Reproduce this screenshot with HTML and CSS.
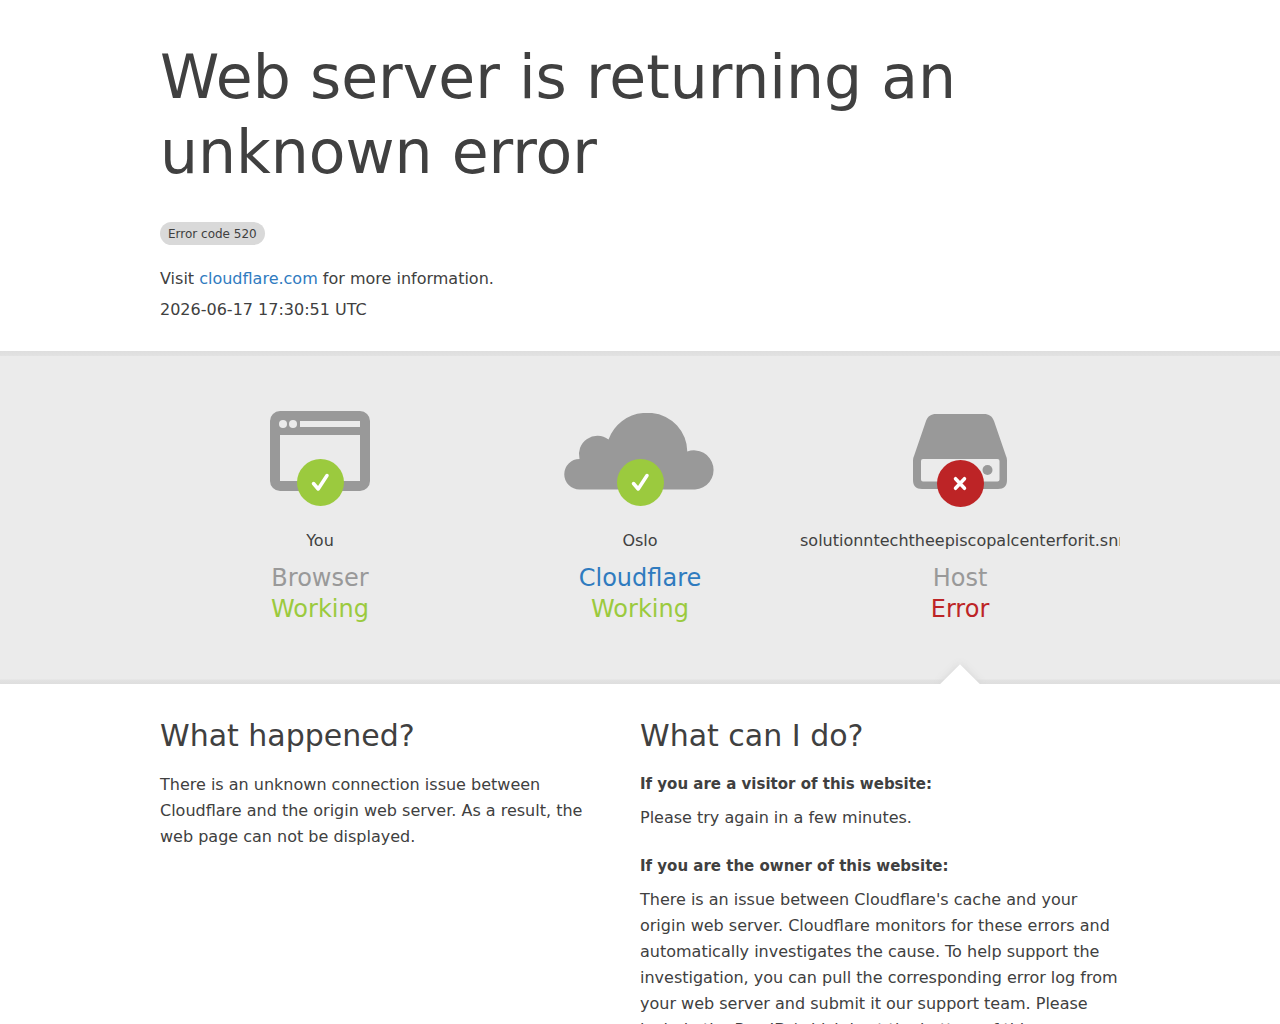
FILE: index.html
```html
<!DOCTYPE html>
<html lang="en">
<head>
<meta charset="utf-8">
<meta name="viewport" content="width=device-width, initial-scale=1">
<title>520: Web server is returning an unknown error</title>
<link rel="stylesheet" href="styles.css">
</head>
<body>
<header class="container intro">
  <h1 class="title">Web server is returning an unknown error</h1>
  <span class="code">Error code 520</span>
  <p class="info">Visit <a class="link" href="https://www.cloudflare.com/">cloudflare.com</a> for more information.</p>
  <p class="time">2026-06-17 17:30:51 UTC</p>
</header>
<main>
  <section class="band">
    <div class="container statuses">
      <div class="status">
        <svg class="icon" viewBox="0 0 160 98" aria-hidden="true">
          <path class="shape" fill-rule="evenodd" d="M40 0h80a10 10 0 0 1 10 10v60a10 10 0 0 1-10 10H40a10 10 0 0 1-10-10V10A10 10 0 0 1 40 0zM40 24v46h80V24zM60 10v6h60v-6z"/>
          <circle class="hole" cx="43" cy="13" r="4"/>
          <circle class="hole" cx="53" cy="13" r="4"/>
          <circle class="ok" cx="80.5" cy="71.5" r="23.5"/>
          <path class="mark" d="M73.5 72.5l4.700 5.500L87 64.500"/>
        </svg>
        <span class="place">You</span>
        <h2 class="name">Browser</h2>
        <span class="state state-ok">Working</span>
      </div>
      <div class="status">
        <svg class="icon" viewBox="0 0 160 98" aria-hidden="true">
          <path class="shape" d="M19.500 78.500a15.250 15.250 0 0 1 0-30.500A18.500 18.500 0 0 1 48.500 28.500A40 40 0 0 1 83 2h9A39 39 0 0 1 127.300 40.500A19.600 19.600 0 1 1 135 78.500z"/>
          <circle class="ok" cx="80.5" cy="71.5" r="23.5"/>
          <path class="mark" d="M73.5 72.5l4.700 5.500L87 64.500"/>
        </svg>
        <span class="place">Oslo</span>
        <h2 class="name"><a class="link" href="https://www.cloudflare.com/">Cloudflare</a></h2>
        <span class="state state-ok">Working</span>
      </div>
      <div class="status status-active">
        <svg class="icon" viewBox="0 0 160 98" aria-hidden="true">
          <path class="shape" fill-rule="evenodd" d="M56 3h48c5 0 8 2 10 7l12 35c1 2 1 4 1 6v18c0 6-3 9-9 9H42c-6 0-9-3-9-9V51c0-2 0-4 1-6l12-35c2-5 5-7 10-7zM43 48q-2 0-2 2v18.500q0 2 2 2h74.500q2 0 2-2V50q0-2-2-2z"/>
          <circle class="shape" cx="107.5" cy="59" r="5"/>
          <circle class="bad" cx="80.5" cy="72.5" r="23.5"/>
          <path class="mark" d="M75.500 67.700l9 9.600M84.500 67.700l-9 9.600"/>
        </svg>
        <span class="place">solutionntechtheepiscopalcenterforit.snm</span>
        <h2 class="name">Host</h2>
        <span class="state state-bad">Error</span>
      </div>
    </div>
  </section>
  <div class="container details">
    <section class="detail">
      <h2 class="heading">What happened?</h2>
      <p class="text">There is an unknown connection issue between Cloudflare and the origin web server. As a result, the web page can not be displayed.</p>
    </section>
    <section>
      <h2 class="heading">What can I do?</h2>
      <h3 class="subheading">If you are a visitor of this website:</h3>
      <p class="text advice">Please try again in a few minutes.</p>
      <h3 class="subheading">If you are the owner of this website:</h3>
      <p class="text">There is an issue between Cloudflare's cache and your origin web server. Cloudflare monitors for these errors and automatically investigates the cause. To help support the investigation, you can pull the corresponding error log from your web server and submit it our support team. Please include the Ray ID (which is at the bottom of this error page).</p>
    </section>
  </div>
</main>
</body>
</html>
```
FILE: styles.css
```css
* {
  box-sizing: border-box;
}

body,
h1,
h2,
h3,
p {
  margin: 0;
}

body {
  background: #fff;
  color: #404040;
  font: 16px/24px "DejaVu Sans", sans-serif;
}

.container {
  width: 75%;
  max-width: 960px;
  margin: 0 auto;
}

.intro {
  display: flex;
  flex-direction: column;
  align-items: flex-start;
  padding: 40px 0 29px;
}

.title {
  font-size: 60px;
  font-weight: 400;
  line-height: 75px;
}

.code {
  margin: 32px 0 22px;
  padding: 5px 8px 3px;
  border-radius: 12px;
  background: #d9d9d9;
  font-size: 12px;
  line-height: 15px;
}

.info {
  margin-bottom: 7px;
}

.link {
  color: #2f7bbf;
  text-decoration: none;
}

.band {
  background: linear-gradient(#dedede, #e2e2e2 5px, #ebebeb 5px, #ebebeb calc(100% - 5px), #e2e2e2 calc(100% - 4px), #dedede);
}

.statuses {
  display: grid;
  grid-template-columns: repeat(3, minmax(0, 1fr));
}

.status {
  position: relative;
  display: flex;
  flex-direction: column;
  align-items: center;
  padding: 60px 0 59px;
  overflow: hidden;
}

.status-active::after {
  content: "";
  position: absolute;
  bottom: -14px;
  left: 50%;
  width: 28px;
  height: 28px;
  margin-left: -14px;
  background: #fff;
  box-shadow: 0 0 8px #d4d4d4;
  transform: rotate(45deg);
}

.icon {
  width: 160px;
  height: 98px;
  margin-bottom: 20px;
}

.shape {
  fill: #999;
}

.hole {
  fill: #ebebeb;
}

.ok {
  fill: #9bca3e;
}

.bad {
  fill: #bd2426;
}

.mark {
  fill: none;
  stroke: #fff;
  stroke-width: 3.5;
  stroke-linecap: round;
  stroke-linejoin: round;
}

.place {
  max-width: 100%;
  margin-bottom: 10px;
  overflow: hidden;
  white-space: nowrap;
}

.name,
.state {
  font-size: 24px;
  font-weight: 400;
  line-height: 31px;
}

.name {
  color: #999;
}

.state-ok {
  color: #9bca3e;
}

.state-bad {
  color: #bd2426;
}

.details {
  display: grid;
  grid-template-columns: repeat(2, minmax(0, 1fr));
  padding: 32px 0;
}

.detail {
  padding-right: 32px;
}

.heading {
  margin-bottom: 17px;
  font-size: 30px;
  font-weight: 400;
  line-height: 39px;
}

.subheading {
  margin-bottom: 9px;
  font-size: 15px;
  line-height: 24px;
}

.text {
  line-height: 26px;
}

.advice {
  margin-bottom: 23px;
}
```
